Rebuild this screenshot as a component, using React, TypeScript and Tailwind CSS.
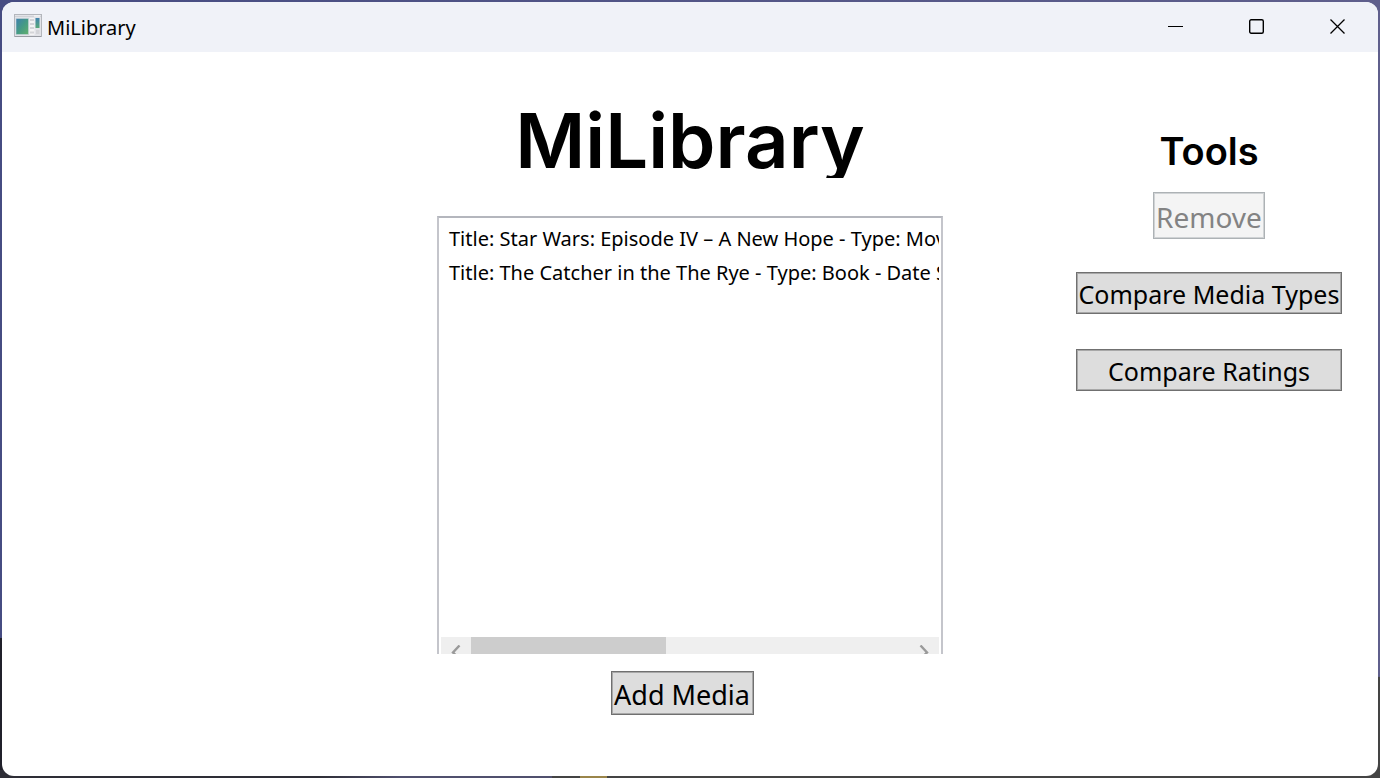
import type { ButtonHTMLAttributes, ReactNode } from "react";

const media = [
  "Title: Star Wars: Episode IV – A New Hope - Type: Movie",
  "Title: The Catcher in the The Rye - Type: Book - Date Started",
];

function AppIcon() {
  return (
    <svg width="28" height="24" viewBox="0 0 28 24" aria-hidden="true" className="mb-[2px]">
      <defs>
        <linearGradient id="pane" x1="0" y1="0" x2="1" y2="1">
          <stop offset="0" stopColor="#3f7fae" />
          <stop offset="0.5" stopColor="#459a86" />
          <stop offset="1" stopColor="#62b06c" />
        </linearGradient>
        <linearGradient id="strip" x1="0" y1="0" x2="0" y2="1">
          <stop offset="0" stopColor="#4184ae" />
          <stop offset="1" stopColor="#58a878" />
        </linearGradient>
      </defs>
      <rect x="0.5" y="0.5" width="27" height="22" fill="#e2e3e8" stroke="#b3b6bc" />
      <path d="M1 22.5H27" stroke="#999ca3" />
      <path d="M1 2.5H27" stroke="#d0d2d7" />
      <path d="M20 2H26" stroke="#fff" />
      <rect x="2" y="4.500" width="12.5" height="16" fill="url(#pane)" stroke="#c9d6dc" strokeWidth="0.6" />
      <rect x="15.500" y="4" width="5" height="17" fill="#f4f4f5" />
      <path d="M16 6H20M16 10H20M16 14H20M16 18.5H20" stroke="#d3d4d8" strokeWidth="2" />
      <rect x="21.500" y="4" width="4" height="10" fill="url(#strip)" />
      <rect x="22" y="16" width="3.5" height="4" fill="#d3d4d8" />
    </svg>
  );
}

function CaptionButton({ label, children }: { label: string; children: ReactNode }) {
  return (
    <button type="button" aria-label={label} className="flex h-full w-[81px] items-center justify-center">
      <svg width="16" height="16" viewBox="0 0 16 16" fill="none" stroke="#000" aria-hidden="true">
        {children}
      </svg>
    </button>
  );
}

function PushButton({ className = "", ...rest }: ButtonHTMLAttributes<HTMLButtonElement>) {
  return (
    <button
      type="button"
      className={`flex items-center justify-center whitespace-nowrap border border-[#707070] bg-[#dddddd] text-black shadow-[inset_0_0_0_1px_#a8a8a8] disabled:border-[#adb2b5] disabled:bg-[#f4f4f4] disabled:text-[#838383] disabled:shadow-[inset_0_0_0_1px_#d0d3d5] ${className}`}
      {...rest}
    />
  );
}

export default function App() {
  return (
    <div className="flex min-h-screen flex-col bg-[linear-gradient(to_right,#2e2e36_23%,#50506e_29%,#50506e_40%,#444444_40%,#444444_42%,#9a854a_42%,#9a854a_44%,#444444_44%)] font-['Noto_Sans',sans-serif] text-black">
      <div className="flex grow flex-col bg-[linear-gradient(to_right,#464c82,#5f5f8c),linear-gradient(to_right,transparent_50%,#5f5f8c_50%),linear-gradient(to_right,#20202a_1%,transparent_1%)] bg-[length:100%_82%,100%_87%,100%_99%] bg-no-repeat p-[2px]">
        <div className="flex grow flex-col overflow-hidden rounded-xl bg-white">
          <header className="flex h-[50px] items-center justify-between bg-[#f0f2f8]">
            <div className="flex items-center gap-[5px] pl-3">
              <AppIcon />
              <span className="pt-[2px] text-[20px] leading-6">MiLibrary</span>
            </div>
            <div className="flex h-full">
              <CaptionButton label="Minimize">
                <path d="M0 7.5H15" />
              </CaptionButton>
              <CaptionButton label="Maximize">
                <rect x="0.7" y="0.7" width="13.6" height="13.6" rx="1.5" strokeWidth="1.4" />
              </CaptionButton>
              <CaptionButton label="Close">
                <path d="M0.5 0.5L14.5 14.5M14.5 0.5L0.5 14.5" strokeWidth="1.3" />
              </CaptionButton>
            </div>
          </header>

          <main className="grid grow grid-cols-[1fr_506px_1fr]">
            <section className="col-start-2 flex flex-col items-center pt-11">
              <h1 className="h-[82px] overflow-hidden font-['Inter',sans-serif] text-[76px] font-semibold leading-[88px]">
                MiLibrary
              </h1>

              <div className="mt-[38px] flex h-[438px] w-full flex-col overflow-hidden border-2 border-b-0 border-[#c4c5cb] border-t-[#b4b6bd] px-[2px] pt-1">
                <ul className="grow overflow-hidden text-[20px] leading-[34px]">
                  {media.map((item) => (
                    <li key={item} className="overflow-hidden whitespace-nowrap pl-2">
                      {item}
                    </li>
                  ))}
                </ul>
                <div className="flex h-[17px] shrink-0 items-start overflow-hidden bg-[#efefef]">
                  <button type="button" aria-label="Scroll left" className="flex w-[30px] justify-center pt-2">
                    <svg width="10" height="14" viewBox="0 0 10 14" fill="none" stroke="#9a9a9a" strokeWidth="2.4" aria-hidden="true">
                      <path d="M8.5 0.5L2 7.5L8.5 14" />
                    </svg>
                  </button>
                  <div className="h-full grow">
                    <div className="h-full w-[195px] bg-[#cdcdcd]" />
                  </div>
                  <button type="button" aria-label="Scroll right" className="flex w-[30px] justify-center pt-2">
                    <svg width="10" height="14" viewBox="0 0 10 14" fill="none" stroke="#9a9a9a" strokeWidth="2.4" aria-hidden="true">
                      <path d="M1.5 0.5L8 7.5L1.5 14" />
                    </svg>
                  </button>
                </div>
              </div>

              <PushButton className="mr-4 mt-[17px] h-11 w-[143px] pt-1 text-[27px]">Add Media</PushButton>
            </section>

            <aside className="flex justify-end pr-9 pt-[76px]">
              <div className="flex w-[266px] flex-col items-center">
                <h2 className="font-['Inter',sans-serif] text-[38px] font-semibold leading-[46px]">Tools</h2>
                <PushButton disabled className="mt-[18px] h-[47px] w-28 pt-[2px] text-[28px]">
                  Remove
                </PushButton>
                <PushButton className="mt-[33px] h-[42px] w-full pt-1 text-[25px]">Compare Media Types</PushButton>
                <PushButton className="mt-[35px] h-[42px] w-full pt-1 text-[25px]">Compare Ratings</PushButton>
              </div>
            </aside>
          </main>
        </div>
      </div>
    </div>
  );
}
